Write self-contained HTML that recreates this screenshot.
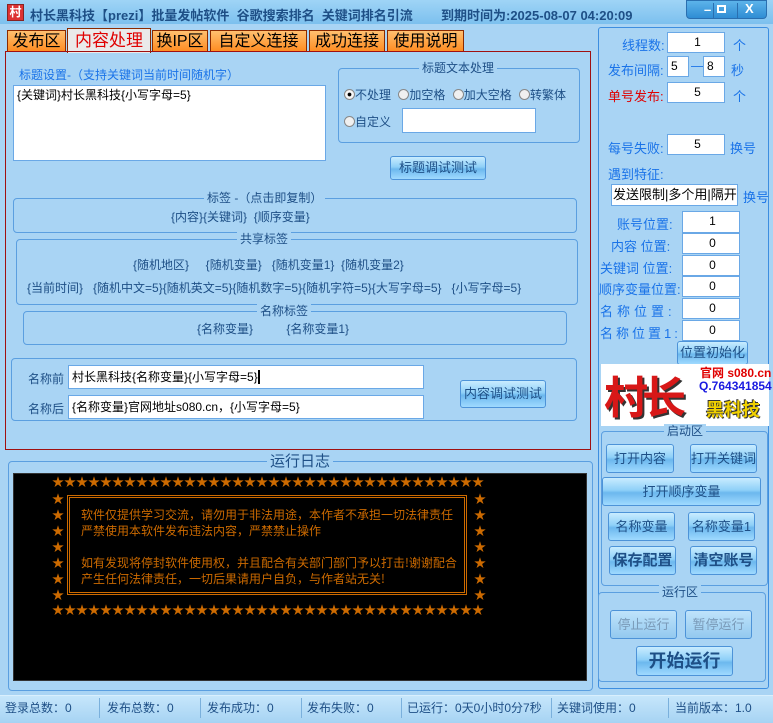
<!DOCTYPE html>
<html><head><meta charset="utf-8">
<style>
*{box-sizing:border-box;margin:0;padding:0}
body{width:773px;height:723px;overflow:hidden;background:#a9d4f4;font-family:"Liberation Sans","Noto Sans CJK SC",sans-serif;font-size:12px;color:#1e4f86;position:relative}
.a{position:absolute;white-space:nowrap}
.grp{position:absolute;border:1px solid #5b9fe0;border-radius:4px}
.gt{position:absolute;background:#a9d4f4;padding:0 3px;line-height:14px;top:-8px;color:#1e4f86}
.inp{position:absolute;background:#fff;border:1px solid #6aa8e6;color:#000;line-height:18px;padding-left:3px}
.btn{position:absolute;border:1px solid #4d93d8;border-radius:3px;background:linear-gradient(#c9ecff 0%,#8fd0f8 45%,#6cb8ee 55%,#9fdaff 100%);color:#1e4f86;text-align:center;font-size:13px}
.tab{position:absolute;top:30px;height:22px;border:1px solid #8a2a00;border-bottom:none;background:linear-gradient(#ffc070,#ff8a1e);color:#000;font-size:16px;line-height:21px;text-align:center}
.lb{color:#1a73e8;font-size:13px}
.log{position:absolute;color:#cc6a00;font-size:12px;line-height:14px;white-space:pre;font-family:"Noto Sans CJK SC",monospace}
.st{position:absolute;top:700px;font-size:12px;color:#1e4f86;line-height:16px}
.sep{position:absolute;top:698px;width:1px;height:20px;background:#7ab0dc}
</style></head><body>
<div class="a" style="left:0;top:0;width:773px;height:24px;background:linear-gradient(#9fd4f6,#7cc0ee)"></div>
<div class="a" style="left:7px;top:4px;width:17px;height:17px;background:#d33;border:1px solid #822;color:#fff;font-size:12px;line-height:15px;text-align:center;font-weight:bold">村</div>
<div class="a" style="left:30px;top:5px;font-size:13px;font-weight:bold;color:#1e4f86">村长黑科技【prezi】批量发帖软件&nbsp; 谷歌搜索排名&nbsp; 关键词排名引流</div>
<div class="a" style="left:441px;top:5px;font-size:13px;font-weight:bold;color:#1e4f86">到期时间为:2025-08-07 04:20:09</div>
<div class="a" style="left:686px;top:0;width:81px;height:19px;background:linear-gradient(#5cb3ea,#2f8dd4);border:1px solid #2a6fb0;border-radius:0 0 4px 4px"></div>
<div class="a" style="left:704px;top:2px;color:#fff;font-weight:bold;font-size:13px">–</div>
<div class="a" style="left:713px;top:3px;width:1px;height:15px;background:#2a6fb0"></div>
<div class="a" style="left:717px;top:5px;width:9px;height:8px;border:2px solid #fff"></div>
<div class="a" style="left:737px;top:3px;width:1px;height:15px;background:#2a6fb0"></div>
<div class="a" style="left:745px;top:1px;color:#fff;font-weight:bold;font-size:13px">X</div>
<div class="tab" style="left:7px;width:59px">发布区</div>
<div class="tab" style="left:67px;width:84px;top:28px;height:25px;background:#eaeaea;color:#e00000;font-size:17px;line-height:24px;border-color:#8a2a00">内容处理</div>
<div class="tab" style="left:152px;width:56px">换IP区</div>
<div class="tab" style="left:210px;width:97px">自定义连接</div>
<div class="tab" style="left:309px;width:76px">成功连接</div>
<div class="tab" style="left:387px;width:77px">使用说明</div>
<div class="a" style="left:5px;top:51px;width:586px;height:399px;border:1px solid #a01010"></div>
<div class="a" style="left:19px;top:66px;color:#1a73e8;font-size:12px">标题设置-（支持关键词当前时间随机字）</div>
<div class="inp" style="left:13px;top:85px;width:313px;height:76px;line-height:16px;padding-top:1px">{关键词}村长黑科技{小写字母=5}</div>
<div class="grp" style="left:338px;top:68px;width:242px;height:75px"><span class="gt" style="left:80px">标题文本处理</span></div>
<div class="a" style="left:344px;top:87px;font-size:12px;color:#1e4f86;line-height:16px">
<span style="display:inline-block;width:11px;height:11px;border-radius:50%;border:1px solid #888;background:radial-gradient(#000 25%,#fff 35%,#ddd);vertical-align:-1px"></span>不处理
<span style="display:inline-block;width:11px;height:11px;border-radius:50%;border:1px solid #888;background:#f0f0f0;vertical-align:-1px;margin-left:4px"></span>加空格
<span style="display:inline-block;width:11px;height:11px;border-radius:50%;border:1px solid #888;background:#f0f0f0;vertical-align:-1px;margin-left:4px"></span>加大空格
<span style="display:inline-block;width:11px;height:11px;border-radius:50%;border:1px solid #888;background:#f0f0f0;vertical-align:-1px;margin-left:4px"></span>转繁体</div>
<div class="a" style="left:344px;top:113px;font-size:12px;color:#1e4f86"><span style="display:inline-block;width:11px;height:11px;border-radius:50%;border:1px solid #888;background:#f0f0f0;vertical-align:-1px"></span>自定义</div>
<div class="inp" style="left:402px;top:108px;width:134px;height:25px"></div>
<div class="btn" style="left:390px;top:156px;width:96px;height:24px;line-height:22px">标题调试测试</div>
<div class="grp" style="left:13px;top:198px;width:564px;height:35px"><span class="gt" style="left:190px">标签 -（点击即复制）</span></div>
<div class="a" style="left:171px;top:208px">{内容}{关键词}&nbsp; {顺序变量}</div>
<div class="grp" style="left:16px;top:239px;width:562px;height:66px"><span class="gt" style="left:220px">共享标签</span></div>
<div class="a" style="left:133px;top:256px">{随机地区}&nbsp;&nbsp;&nbsp;&nbsp; {随机变量}&nbsp;&nbsp; {随机变量1}&nbsp; {随机变量2}</div>
<div class="a" style="left:27px;top:279px">{当前时间}&nbsp;&nbsp; {随机中文=5}{随机英文=5}{随机数字=5}{随机字符=5}{大写字母=5}&nbsp;&nbsp; {小写字母=5}</div>
<div class="grp" style="left:23px;top:311px;width:544px;height:34px"><span class="gt" style="left:233px">名称标签</span></div>
<div class="a" style="left:197px;top:320px">{名称变量}&nbsp;&nbsp;&nbsp;&nbsp;&nbsp;&nbsp;&nbsp;&nbsp;&nbsp; {名称变量1}</div>
<div class="grp" style="left:11px;top:358px;width:566px;height:63px"></div>
<div class="a" style="left:28px;top:370px;font-size:12px">名称前</div>
<div class="inp" style="left:68px;top:365px;width:356px;height:24px;line-height:22px">村长黑科技{名称变量}{小写字母=5}<span style="border-left:2px solid #000"></span></div>
<div class="a" style="left:28px;top:400px;font-size:12px">名称后</div>
<div class="inp" style="left:68px;top:395px;width:356px;height:24px;line-height:22px">{名称变量}官网地址s080.cn，{小写字母=5}</div>
<div class="btn" style="left:460px;top:380px;width:86px;height:28px;line-height:26px">内容调试测试</div>
<!-- log -->
<div class="grp" style="left:8px;top:461px;width:585px;height:230px"><span class="gt" style="left:258px;top:-9px;font-size:15px;line-height:17px;color:#1e4f86">运行日志</span></div>
<div class="a" style="left:13px;top:473px;width:574px;height:208px;background:#000;border:1px solid #333"></div>
<div class="log" style="left:52px;top:475px">★★★★★★★★★★★★★★★★★★★★★★★★★★★★★★★★★★★★</div>
<div class="log" style="left:52px;top:603px">★★★★★★★★★★★★★★★★★★★★★★★★★★★★★★★★★★★★</div>
<div class="log" style="left:52px;top:491px;line-height:16px">★
★
★
★
★
★
★</div>
<div class="log" style="left:474px;top:491px;line-height:16px">★
★
★
★
★
★
★</div>
<div class="a" style="left:67px;top:495px;width:400px;height:100px;border:3px double #cc6a00"></div>
<div class="log" style="left:81px;top:507px;line-height:16px">软件仅提供学习交流，请勿用于非法用途，本作者不承担一切法律责任
严禁使用本软件发布违法内容，严禁禁止操作

如有发现将停封软件使用权，并且配合有关部门部门予以打击!谢谢配合
产生任何法律责任，一切后果请用户自负，与作者站无关!</div>
<!-- right panel -->
<div class="a" style="left:598px;top:27px;width:171px;height:662px;border:1px solid #3d8ee0;border-radius:3px"></div>
<div class="a lb" style="left:622px;top:35px">线程数:</div>
<div class="inp" style="left:667px;top:32px;width:58px;height:21px;text-align:center">1</div>
<div class="a lb" style="left:733px;top:35px">个</div>
<div class="a lb" style="left:608px;top:60px">发布间隔:</div>
<div class="inp" style="left:667px;top:56px;width:22px;height:21px">5</div>
<div class="a lb" style="left:691px;top:58px">—</div>
<div class="inp" style="left:703px;top:56px;width:22px;height:21px">8</div>
<div class="a lb" style="left:731px;top:60px">秒</div>
<div class="a lb" style="left:608px;top:86px;color:#e00000">单号发布:</div>
<div class="inp" style="left:667px;top:82px;width:58px;height:21px;text-align:center">5</div>
<div class="a lb" style="left:733px;top:86px">个</div>
<div class="a lb" style="left:608px;top:138px">每号失败:</div>
<div class="inp" style="left:667px;top:134px;width:58px;height:21px;text-align:center">5</div>
<div class="a lb" style="left:730px;top:138px">换号</div>
<div class="a lb" style="left:608px;top:164px">遇到特征:</div>
<div class="inp" style="left:611px;top:184px;width:127px;height:22px;font-size:13px;line-height:20px;padding-left:1px;overflow:hidden">发送限制|多个用|隔开</div>
<div class="a lb" style="left:743px;top:187px">换号</div>
<div class="a lb" style="left:617px;top:214px">账号位置:</div>
<div class="a lb" style="left:611px;top:236px">内容 位置:</div>
<div class="a lb" style="left:600px;top:258px">关键词 位置:</div>
<div class="a lb" style="left:599px;top:279px">顺序变量位置:</div>
<div class="a lb" style="left:600px;top:301px;letter-spacing:4px">名称位置:</div>
<div class="a lb" style="left:600px;top:323px;letter-spacing:3px">名称位置1:</div>
<div class="inp" style="left:682px;top:211px;width:58px;height:22px;text-align:center">1</div>
<div class="inp" style="left:682px;top:233px;width:58px;height:21px;text-align:center">0</div>
<div class="inp" style="left:682px;top:255px;width:58px;height:21px;text-align:center">0</div>
<div class="inp" style="left:682px;top:276px;width:58px;height:21px;text-align:center">0</div>
<div class="inp" style="left:682px;top:298px;width:58px;height:21px;text-align:center">0</div>
<div class="inp" style="left:682px;top:320px;width:58px;height:21px;text-align:center">0</div>
<div class="btn" style="left:677px;top:341px;width:71px;height:24px;line-height:22px">位置初始化</div>
<div class="a" style="left:601px;top:364px;width:168px;height:62px;background:#fff"></div>
<div class="a" style="left:604px;top:364px;font-size:44px;font-weight:bold;color:#d81818;letter-spacing:-6px;text-shadow:2px 2px 0 #333;font-family:'Noto Sans CJK SC',sans-serif;line-height:60px">村长</div>
<div class="a" style="left:700px;top:364px;font-size:12px;font-weight:bold;color:#e00000">官网 s080.cn</div>
<div class="a" style="left:699px;top:379px;font-size:12px;font-weight:bold;color:#1a1ae0">Q.764341854</div>
<div class="a" style="left:706px;top:396px;font-size:18px;font-weight:bold;color:#f0d000;text-shadow:1px 1px 0 #333,-1px -1px 0 #333">黑科技</div>
<div class="grp" style="left:601px;top:431px;width:167px;height:155px"><span class="gt" style="left:62px">启动区</span></div>
<div class="btn" style="left:606px;top:444px;width:68px;height:29px;line-height:27px">打开内容</div>
<div class="btn" style="left:690px;top:444px;width:67px;height:29px;line-height:27px">打开关键词</div>
<div class="btn" style="left:602px;top:477px;width:159px;height:29px;line-height:27px">打开顺序变量</div>
<div class="btn" style="left:608px;top:512px;width:67px;height:29px;line-height:27px">名称变量</div>
<div class="btn" style="left:688px;top:512px;width:67px;height:29px;line-height:27px">名称变量1</div>
<div class="btn" style="left:609px;top:546px;width:67px;height:29px;line-height:27px;font-size:15px;font-weight:bold">保存配置</div>
<div class="btn" style="left:690px;top:546px;width:67px;height:29px;line-height:27px;font-size:15px;font-weight:bold">清空账号</div>
<div class="grp" style="left:598px;top:592px;width:168px;height:90px"><span class="gt" style="left:60px">运行区</span></div>
<div class="btn" style="left:610px;top:610px;width:67px;height:29px;line-height:27px;color:#7a9ab8;background:linear-gradient(#bfe3fb,#93c9ef)">停止运行</div>
<div class="btn" style="left:685px;top:610px;width:67px;height:29px;line-height:27px;color:#7a9ab8;background:linear-gradient(#bfe3fb,#93c9ef)">暂停运行</div>
<div class="btn" style="left:636px;top:646px;width:97px;height:30px;line-height:28px;font-size:18px;font-weight:bold">开始运行</div>
<div class="a" style="left:0;top:695px;width:773px;height:28px;background:linear-gradient(#c6e6fb,#a6d3f3);border-top:1px solid #d9effd"></div>
<div class="st" style="left:5px">登录总数：0</div>
<div class="sep" style="left:99px"></div>
<div class="st" style="left:107px">发布总数：0</div>
<div class="sep" style="left:200px"></div>
<div class="st" style="left:207px">发布成功：0</div>
<div class="sep" style="left:301px"></div>
<div class="st" style="left:307px">发布失败：0</div>
<div class="sep" style="left:401px"></div>
<div class="st" style="left:407px">已运行：0天0小时0分7秒</div>
<div class="sep" style="left:551px"></div>
<div class="st" style="left:557px">关键词使用：0</div>
<div class="sep" style="left:668px"></div>
<div class="st" style="left:675px">当前版本：1.0</div>
</body></html>
